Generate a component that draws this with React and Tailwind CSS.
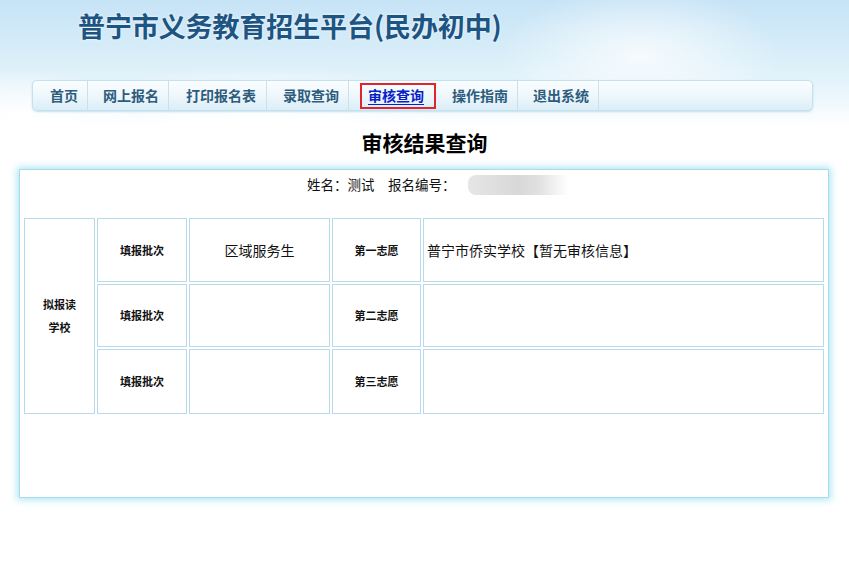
import React from "react";

const navItems = [
  { t: "首页", w: "pl-[17px] pr-[9px]" },
  { t: "网上报名", w: "pl-[15px] pr-[9px]" },
  { t: "打印报名表", w: "pl-[17px] pr-[10px]" },
  { t: "录取查询", w: "pl-[16px] pr-[9px]" },
];

function Cell({ children, className = "" }) {
  return (
    <div
      className={
        "border border-[#b7dbec] flex items-center justify-center " + className
      }
    >
      {children}
    </div>
  );
}

export default function App() {
  const rows = [
    { p: "区域服务生", z: "第一志愿", s: "普宁市侨实学校【暂无审核信息】" },
    { p: "", z: "第二志愿", s: "" },
    { p: "", z: "第三志愿", s: "" },
  ];
  return (
    <div
      className="w-[849px] h-[573px] bg-white overflow-hidden"
      style={{ fontFamily: '"Noto Sans CJK SC", "Noto Sans", sans-serif' }}
    >
      <div className="bg-[radial-gradient(ellipse_140px_70px_at_640px_55px,rgba(255,255,255,0.75),rgba(255,255,255,0)),radial-gradient(ellipse_200px_60px_at_260px_125px,rgba(255,255,255,0.95),rgba(255,255,255,0)),radial-gradient(ellipse_120px_50px_at_20px_120px,rgba(255,255,255,1),rgba(255,255,255,0)),linear-gradient(180deg,#c6e3f6_0%,#d9eef9_45%,#eaf6fc_75%,#ffffff_100%)] h-[126px] pt-[8px]">
        <h1 className="ml-[78px] text-[27px] leading-[36px] font-bold text-[#1d5482] tracking-[-0.1px] [text-shadow:0_0_3px_rgba(255,255,255,0.9)]">
          普宁市义务教育招生平台(民办初中)
        </h1>
        <div className="mt-[36px] mx-[32px] w-[781px] h-[31px] rounded-[5px] border border-[#c2e2ef] bg-[linear-gradient(180deg,#fbfdff_0%,#eef7fc_50%,#dbeef8_100%)] shadow-[0_1px_2px_rgba(120,180,210,0.4)] flex items-center text-[14px] font-bold text-[#2e5c7c]">
          {navItems.map((n) => (
            <div
              key={n.t}
              className={"h-[29px] flex items-center border-r border-[#cfdfe8] " + n.w}
            >
              {n.t}
            </div>
          ))}
          <div className="ml-[11px] h-[26px] w-[76px] border-2 border-[#e0262a] flex items-center pl-[6px] text-[#0a1fc8] underline underline-offset-[3px]">
            审核查询
          </div>
          <div className="h-[29px] flex items-center border-r border-[#cfdfe8] pl-[16px] pr-[9px]">
            操作指南
          </div>
          <div className="h-[29px] flex items-center border-r border-[#cfdfe8] pl-[15px] pr-[9px]">
            退出系统
          </div>
        </div>
      </div>
      <div className="text-center text-[21px] leading-[30px] font-bold text-black mt-[1px]">
        审核结果查询
      </div>
      <div className="mt-[12px] ml-[19px] w-[810px] h-[329px] border border-[#a9dcec] shadow-[0_0_7px_2px_rgba(150,222,240,0.75)] bg-white px-[4px]">
        <div className="h-[28px] flex items-center pl-[283px] text-[13.5px] text-[#111] pt-[1px]">
          <span>姓名：测试　报名编号：</span>
          <span className="ml-[12px] w-[100px] h-[20px] bg-[linear-gradient(90deg,#e6e6e6_0%,#d8d8d8_50%,#e0e0e0_70%,rgba(255,255,255,0)_100%)] rounded-l-[8px]" />
        </div>
        <div className="mt-[20px] grid grid-cols-[71px_90px_141px_89px_1fr] grid-rows-[64px_63px_65px] gap-[2px] text-[#111]">
          <Cell className="row-span-3 flex-col text-[11px] font-bold leading-[23px]">
            <span>拟报读</span>
            <span>学校</span>
          </Cell>
          {rows.map((r, i) => (
            <React.Fragment key={i}>
              <Cell className="text-[11px] font-bold">填报批次</Cell>
              <Cell className="text-[14px]">{r.p}</Cell>
              <Cell className="text-[11px] font-bold">{r.z}</Cell>
              <Cell className="!justify-start pl-[3px] text-[14px]">{r.s}</Cell>
            </React.Fragment>
          ))}
        </div>
      </div>
    </div>
  );
}
